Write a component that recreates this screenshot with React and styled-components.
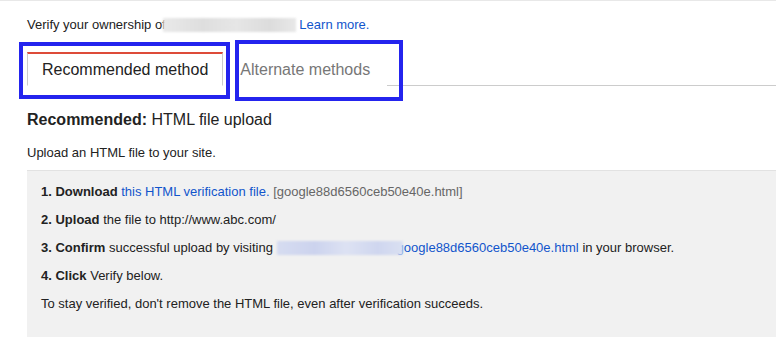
import React from "react";
import styled, { createGlobalStyle } from "styled-components";

const GlobalStyle = createGlobalStyle`
  body {
    margin: 0;
    background: #fff;
    font-family: "Liberation Sans", Arial, sans-serif;
    font-size: 13px;
    color: #222;
  }
`;

const steps = [
  { num: "1.", verb: "Download", kind: "download" },
  { num: "2.", verb: "Upload", kind: "upload" },
  { num: "3.", verb: "Confirm", kind: "confirm" },
  { num: "4.", verb: "Click", kind: "click" },
];

const StepBody = ({ kind }) => {
  if (kind === "download") {
    return (
      <>
        <Link href="#">this HTML verification file.</Link>{" "}
        <Muted>[google88d6560ceb50e40e.html]</Muted>
      </>
    );
  }
  if (kind === "upload") return <>the file to http://www.abc.com/</>;
  if (kind === "confirm") {
    return (
      <>
        successful upload by visiting{" "}
        <Blur $tone="blue" $width={126} />
        <Link href="#">google88d6560ceb50e40e.html</Link> in your browser.
      </>
    );
  }
  return <>Verify below.</>;
};

const App = () => {
  return (
    <Page>
      <GlobalStyle />
      <Intro>
        Verify your ownership of
        <Blur $tone="gray" $width={133} $pull={-3} /> <Link href="#">Learn more.</Link>
      </Intro>

      <TabBar>
        <Tab $active>Recommended method</Tab>
        <Tab>Alternate methods</Tab>
        <Mark style={{ left: -8, top: -10, width: 211, height: 57 }} />
        <Mark style={{ left: 208, top: -12, width: 168, height: 61 }} />
      </TabBar>

      <Heading>
        <b>Recommended:</b> HTML file upload
      </Heading>
      <Lead>Upload an HTML file to your site.</Lead>

      <Instructions>
        {steps.map((s) => (
          <Step key={s.num}>
            <b>
              {s.num} {s.verb}
            </b>{" "}
            <StepBody kind={s.kind} />
          </Step>
        ))}
        <Step>
          To stay verified, don't remove the HTML file, even after verification
          succeeds.
        </Step>
      </Instructions>
    </Page>
  );
};

export default App;

const Page = styled.div`
  border-top: 1px solid #e8e8e8;
  padding-left: 27px;
  height: 336px;
  overflow: hidden;
`;

const Intro = styled.div`
  padding-top: 16px;
  line-height: 16px;
  white-space: nowrap;
`;

const Link = styled.a`
  color: #1155cc;
  text-decoration: none;
`;

const Muted = styled.span`
  color: #666;
`;

const Blur = styled.span`
  display: inline-block;
  vertical-align: -3px;
  width: ${(p) => p.$width}px;
  height: 14px;
  margin-left: ${(p) => p.$pull || 0}px;
  margin-right: ${(p) => (p.$tone === "blue" ? -6 : 0)}px;
  position: relative;
  z-index: 1;
  filter: blur(1.2px);
  background: ${(p) =>
    p.$tone === "blue"
      ? "linear-gradient(90deg, #d6dcf1, #ccd3ee 30%, #dde2f3 55%, #cfd6ef 80%, #dae0f2)"
      : "linear-gradient(90deg, #e9e9e9, #dedede 30%, #e6e6e6 55%, #dcdcdc 80%, #e8e8e8)"};
`;

const TabBar = styled.div`
  position: relative;
  display: flex;
  align-items: flex-end;
  margin-top: 19px;
  border-bottom: 1px solid #ccc;
`;

const Tab = styled.div`
  height: 31px;
  line-height: 31px;
  font-size: 16px;
  padding: 0 ${(p) => (p.$active ? "14px" : "16px")};
  color: ${(p) => (p.$active ? "#222" : "#777")};
  border: 1px solid ${(p) => (p.$active ? "#ccc" : "transparent")};
  border-top: 2px solid ${(p) => (p.$active ? "#dd4b39" : "transparent")};
  border-bottom: 1px solid ${(p) => (p.$active ? "#fff" : "transparent")};
  margin-bottom: -1px;
  background: #fff;
`;

const Mark = styled.div`
  position: absolute;
  box-sizing: border-box;
  border: 4px solid #2424ee;
  pointer-events: none;
`;

const Heading = styled.div`
  margin-top: 24px;
  font-size: 16px;
  line-height: 20px;
`;

const Lead = styled.div`
  margin-top: 15px;
  line-height: 16px;
`;

const Instructions = styled.div`
  margin-top: 9px;
  background: #f1f1f1;
  border-top: 1px solid #e2e2e2;
  padding: 7px 14px 40px;
`;

const Step = styled.div`
  line-height: 28px;
  white-space: nowrap;
`;
